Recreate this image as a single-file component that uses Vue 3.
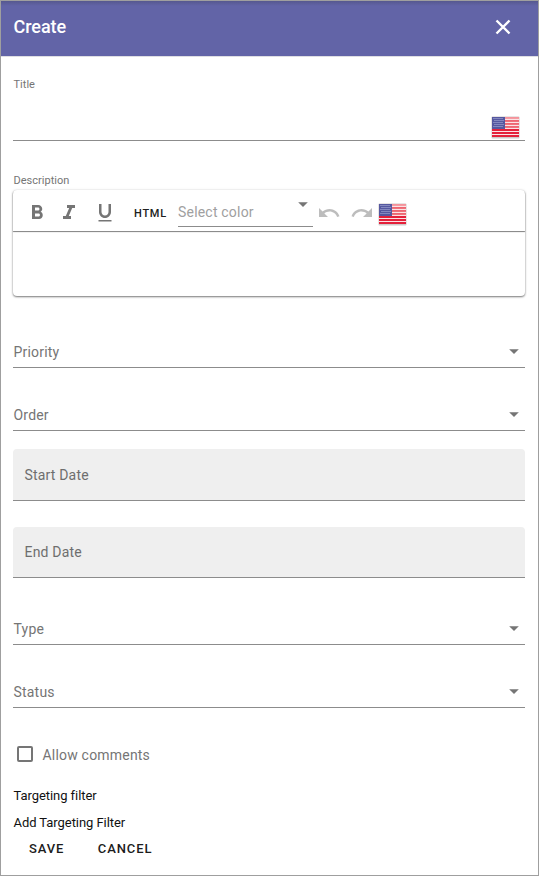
<script setup>
import { ref, h } from 'vue'

const allowComments = ref(false)

const FlagIcon = () =>
  h('svg', { class: 'flag', viewBox: '0 0 29 23', width: 29, height: 23, 'aria-hidden': 'true' }, [
    h('rect', { x: 0.5, y: 0.5, width: 28, height: 22, rx: 1, fill: '#cfcaca' }),
    h('rect', { x: 1, y: 1, width: 27, height: 20, fill: '#fbe3e5' }),
    ...[1, 4, 7, 10].map((y) => h('rect', { x: 14, y, width: 14, height: 1.9, fill: y < 4 ? '#f4939b' : '#ee6672' })),
    ...[13, 16, 19].map((y) => h('rect', { x: 1, y, width: 27, height: 2, fill: '#e4203a' })),
    h('rect', { x: 1, y: 1, width: 13, height: 12, fill: '#5558a0' }),
    ...[0, 1, 2, 3, 4].flatMap((r) =>
      [0, 1, 2, 3, 4].map((c) =>
        h('rect', { x: 2.5 + c * 2 + (r % 2), y: 2 + r * 2, width: 1, height: 1, fill: '#b5b9de' })
      )
    )
  ])

const Caret = () =>
  h('svg', { class: 'caret', viewBox: '0 0 10 5', width: 10, height: 5 }, [
    h('path', { d: 'M0.2 0.2h9.6L5 5z', fill: '#757575' })
  ])
</script>

<template>
  <form class="dialog" @submit.prevent>
    <header class="header">
      <h1>Create</h1>
      <button class="close" type="button" aria-label="Close">
        <svg width="16" height="16" viewBox="0 0 16 16"><path d="M1.500 1.500l13 13M14.500 1.500l-13 13" stroke="#fff" stroke-width="2.4" fill="none" /></svg>
      </button>
    </header>

    <main class="content">
      <section class="title-field">
        <label class="small-label">Title</label>
        <FlagIcon />
      </section>

      <label class="small-label description-label">Description</label>
      <section class="editor">
        <div class="toolbar">
          <svg class="bold" width="24" height="24" viewBox="0 0 24 24"><path fill="#757575" d="M15.6 10.79c.97-.67 1.65-1.77 1.65-2.79 0-2.26-1.75-4-4-4H7v14h7.04c2.09 0 3.71-1.7 3.71-3.79 0-1.52-.86-2.82-2.15-3.42zM10 6.5h3c.83 0 1.5.67 1.5 1.5s-.67 1.5-1.5 1.5h-3v-3zm3.5 9H10v-3h3.5c.83 0 1.5.67 1.5 1.5s-.67 1.5-1.5 1.5z" /></svg>
          <svg class="italic" width="24" height="24" viewBox="0 0 24 24"><path fill="#757575" d="M10 4v3h2.21l-3.42 8H6v3h8v-3h-2.21l3.42-8H18V4z" /></svg>
          <svg class="underline" width="24" height="24" viewBox="0 0 24 24"><path fill="#757575" d="M12 17c3.31 0 6-2.69 6-6V3h-2.5v8c0 1.93-1.57 3.5-3.5 3.5S8.500 12.930 8.500 11V3H6v8c0 3.310 2.690 6 6 6zm-6.500 2v1.500h13V19h-13z" /></svg>
          <span class="html">HTML</span>
          <div class="color-select"><span>Select color</span><Caret /></div>
          <svg class="undo" width="24" height="24" viewBox="0 0 24 24"><path fill="#bdbdbd" d="M12.500 8c-2.650 0-5.050.990-6.900 2.600L2 7v9h9l-3.620-3.620c1.390-1.160 3.160-1.880 5.120-1.880 3.540 0 6.550 2.310 7.600 5.500l2.370-.780C21.080 11.030 17.150 8 12.500 8z" /></svg>
          <svg class="redo" width="24" height="24" viewBox="0 0 24 24"><path fill="#bdbdbd" d="M18.400 10.600C16.550 8.990 14.150 8 11.500 8c-4.650 0-8.580 3.030-9.960 7.220L3.900 16c1.050-3.190 4.050-5.500 7.600-5.500 1.950 0 3.730.720 5.120 1.880L13 16h9V7l-3.600 3.600z" /></svg>
          <FlagIcon />
        </div>
        <div class="editor-body"></div>
      </section>

      <div class="select priority"><span>Priority</span><Caret /></div>
      <div class="select"><span>Order</span><Caret /></div>
      <div class="date start">Start Date</div>
      <div class="date end">End Date</div>
      <div class="select type"><span>Type</span><Caret /></div>
      <div class="select status"><span>Status</span><Caret /></div>

      <label class="checkbox">
        <input v-model="allowComments" type="checkbox" />
        <span>Allow comments</span>
      </label>
      <p class="filter">Targeting filter</p>
      <p class="filter">Add Targeting Filter</p>
      <footer class="actions">
        <button type="button">SAVE</button>
        <button type="button">CANCEL</button>
      </footer>
    </main>
  </form>
</template>

<style>
body { background: #fff; }
</style>

<style scoped>
* { box-sizing: border-box; }
.dialog {
  width: 539px;
  height: 876px;
  border: 1px solid #9f9f9f;
  background: #fff;
  font-family: Roboto, sans-serif;
  color: #757575;
  overflow: hidden;
}
.header {
  height: 55px;
  padding: 0 27px 0 12.500px;
  display: flex;
  align-items: center;
  justify-content: space-between;
  background: linear-gradient(#56588f, #6264a7 5px);
  box-shadow: 0 1px 0 #dedee3;
}
h1 {
  margin: 0;
  padding-bottom: 3px;
  font-size: 18px;
  line-height: 24px;
  font-weight: 500;
  letter-spacing: -0.05px;
  color: #fff;
}
button { border: 0; padding: 0; background: none; font-family: inherit; }
.close { display: flex; padding-bottom: 3px; }
.content { padding: 0 13px 0 12px; }
.small-label {
  display: block;
  padding-left: 0.5px;
  font-size: 11px;
  line-height: 14px;
  letter-spacing: 0.02px;
}
.title-field {
  height: 85px;
  padding-top: 22px;
  display: flex;
  align-items: flex-start;
  justify-content: space-between;
  border-bottom: 1px solid #8c8c8c;
}
.title-field :deep(.flag) { margin: 38px 5px 0 0; }
.description-label { margin: 33px 0 2px; }
.editor {
  height: 106px;
  border-radius: 4px;
  box-shadow: 0 1px 2px rgba(0, 0, 0, 0.5), 0 0 3px rgba(0, 0, 0, 0.1);
}
.toolbar {
  height: 41px;
  display: flex;
  align-items: flex-start;
  border-radius: 4px 4px 0 0;
  box-shadow: 0 1px 1px rgba(0, 0, 0, 0.5);
}
.bold { margin: 11px 0 0 12px; }
.italic { margin: 11px 0 0 8px; }
.underline { margin: 11px 0 0 12px; }
.html {
  width: 44px;
  margin: 17px 0 0 17px;
  font-size: 11px;
  line-height: 14px;
  font-weight: 500;
  letter-spacing: 0.75px;
  color: #202020;
}
.color-select {
  width: 135px;
  height: 37px;
  display: flex;
  justify-content: space-between;
  border-bottom: 1px solid #8c8c8c;
  font-size: 14px;
  line-height: 20px;
  letter-spacing: 0.2px;
  color: #a0a0a0;
}
.color-select span { margin-top: 12px; }
.color-select :deep(.caret) { margin: 12px 5.500px 0 0; }
.undo { margin: 11px 0 0 4px; }
.redo { margin: 11px 0 0 9px; }
.toolbar :deep(.flag) { margin: 13px 0 0 4px; }
.select {
  height: 63px;
  padding: 0 6px 5px 0.5px;
  display: flex;
  align-items: flex-end;
  justify-content: space-between;
  border-bottom: 1px solid #8c8c8c;
  font-size: 14px;
  line-height: 20px;
  letter-spacing: 0.2px;
}
.select :deep(.caret) { margin-bottom: 8px; }
.priority { height: 72px; }
.date {
  height: 52px;
  padding: 16px 11.500px;
  border-bottom: 1px solid #8c8c8c;
  border-radius: 4px 4px 0 0;
  background: #efefef;
  font-size: 14px;
  line-height: 20px;
  letter-spacing: 0.18px;
  color: #6e6e6e;
}
.start { margin-top: 18px; }
.end { height: 51px; margin-top: 26px; padding-top: 15px; }
.type { height: 67px; }
.checkbox {
  height: 20px;
  margin-top: 37px;
  padding-left: 3.500px;
  display: flex;
  align-items: center;
  gap: 10px;
  font-size: 14px;
  line-height: 20px;
  letter-spacing: 0.2px;
}
.checkbox input {
  appearance: none;
  width: 16px;
  height: 16px;
  margin: 0 0 2px;
  border: 2px solid #757575;
  border-radius: 2px;
}
.filter {
  margin: 0;
  padding-left: 0.5px;
  font-size: 13px;
  line-height: 27px;
  letter-spacing: -0.06px;
  color: #111;
}
.checkbox + .filter { margin-top: 17px; }
.actions { display: flex; gap: 33.500px; padding: 1px 0 0 16px; }
.actions button {
  font-size: 13px;
  line-height: 24px;
  font-weight: 500;
  letter-spacing: 0.9px;
  color: #1c1c1c;
}
</style>
